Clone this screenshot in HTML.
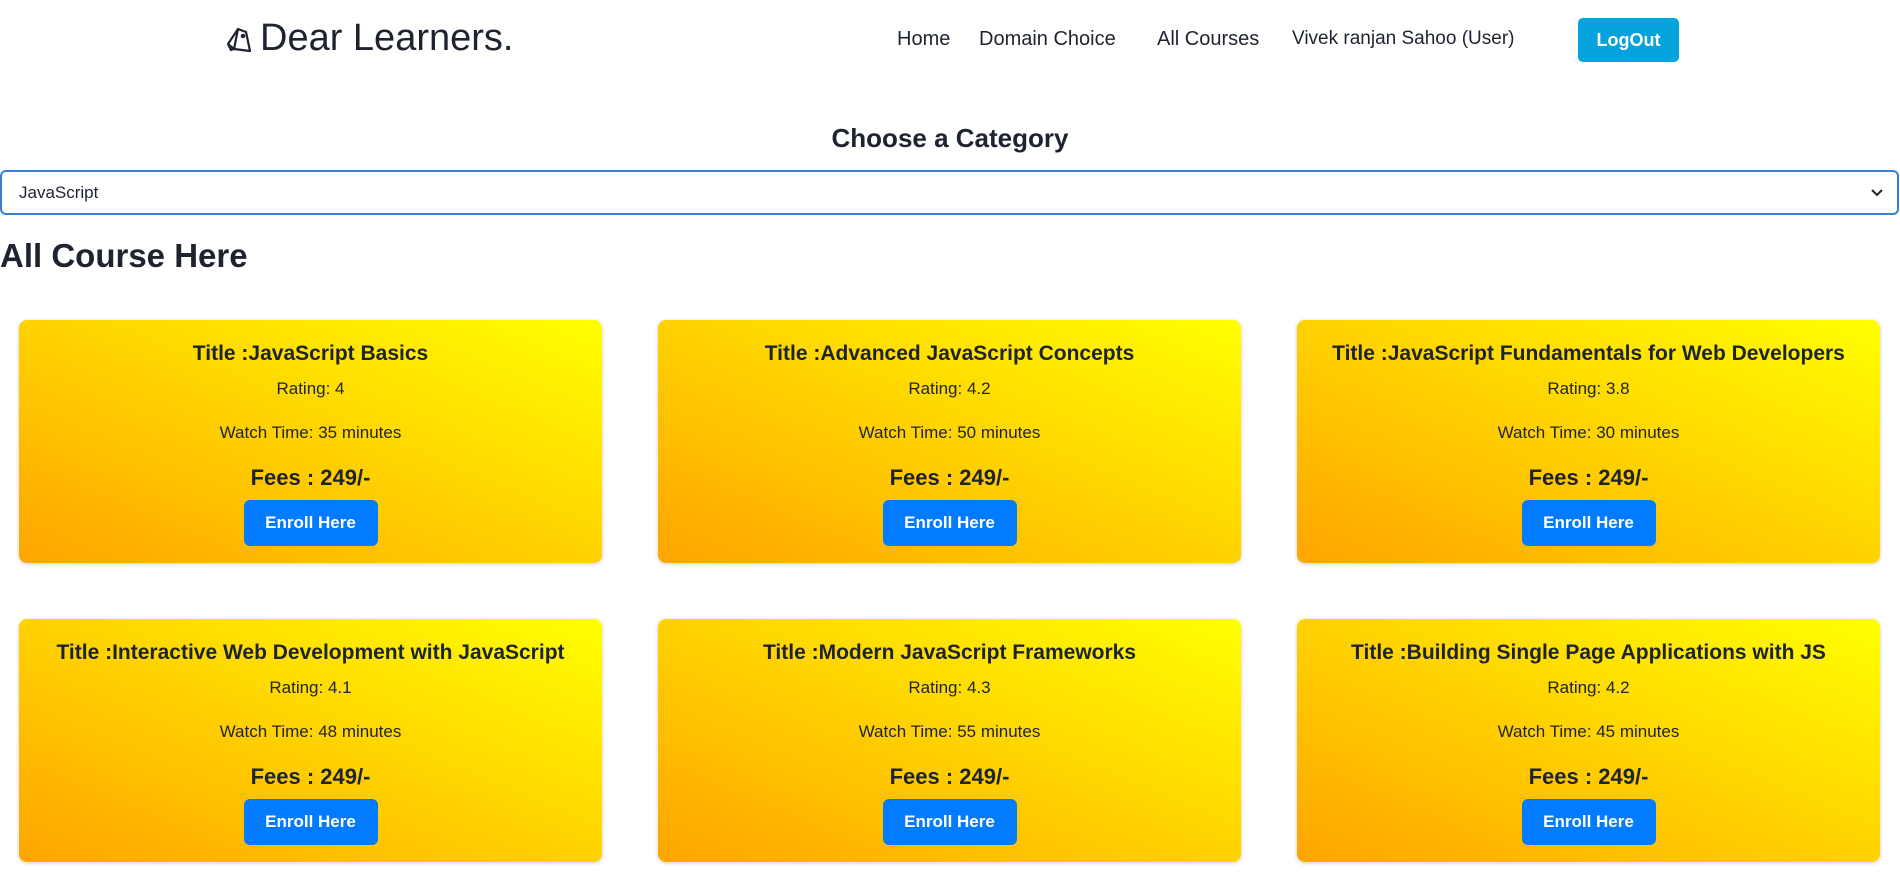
<!DOCTYPE html>
<html><head><meta charset="utf-8"><style>
*{box-sizing:border-box;margin:0;padding:0}
body{width:1900px;height:876px;background:#fff;font-family:"Liberation Sans",sans-serif;color:#1e2330;position:relative;overflow:hidden}
.abs{position:absolute}
.logo{left:224px;top:17px;font-size:38px;display:flex;align-items:center;gap:6px;color:#1e2330}
.nav{top:28px;font-size:20px;color:#1e2330}
.btnlog{left:1578px;top:18px;width:101px;height:44px;background:#04a3de;color:#fff;border-radius:5px;font-weight:bold;font-size:18px;display:flex;align-items:center;justify-content:center}
h2{position:absolute;left:0;width:1900px;top:123px;text-align:center;font-size:26px;font-weight:bold}
.sel{left:0;top:170px;width:1899px;height:45px;border:2px solid #3a80d2;border-radius:6px;font-size:17px;padding:11px 17px}
h1{position:absolute;left:0;top:237px;font-size:33px;font-weight:bold}
.card{position:absolute;width:583px;height:243px;border-radius:8px;background:linear-gradient(to top right,#ffa500,#ffff00);box-shadow:0 1px 4px rgba(0,0,0,.2);text-align:center}
.t{position:absolute;left:0;right:0;top:22px;font-size:21px;font-weight:bold}
.r{position:absolute;left:0;right:0;top:59px;font-size:17px}
.w{position:absolute;left:0;right:0;top:103px;font-size:17px}
.f{position:absolute;left:0;right:0;top:145px;font-size:22px;font-weight:bold}
.b{position:absolute;left:50%;margin-left:-67px;top:180px;width:134px;height:46px;background:#037bfe;color:#fff;border-radius:6px;font-weight:bold;font-size:17px;line-height:46px}
</style></head><body>
<div class="abs logo"><svg width="30" height="30" viewBox="0 0 30 30" fill="none" stroke="#1e2330" stroke-width="2.2" stroke-linejoin="round"><path d="M4 20 L14 5 L22 8 L26 27 L10 25 Z"/><path d="M14 5 L10 25"/><path d="M4 20 L7 26 L10 25"/><circle cx="19" cy="12" r="1.2"/></svg><span>Dear Learners.</span></div>
<div class="abs nav" style="left:897px">Home</div>
<div class="abs nav" style="left:979px">Domain Choice</div>
<div class="abs nav" style="left:1157px">All Courses</div>
<div class="abs nav" style="left:1292px;font-size:19px">Vivek ranjan Sahoo (User)</div>
<div class="abs btnlog">LogOut</div>
<h2>Choose a Category</h2>
<div class="abs sel">JavaScript<svg class="abs" style="right:14px;top:17px" width="12" height="8" viewBox="0 0 12 8"><path d="M1 1 L6 6 L11 1" fill="none" stroke="#222" stroke-width="2"/></svg></div>
<h1>All Course Here</h1>

<div class="card" style="left:19px;top:320px"><div class="t">Title :JavaScript Basics</div><div class="r">Rating: 4</div><div class="w">Watch Time: 35 minutes</div><div class="f">Fees : 249/-</div><div class="b">Enroll Here</div></div>
<div class="card" style="left:658px;top:320px"><div class="t">Title :Advanced JavaScript Concepts</div><div class="r">Rating: 4.2</div><div class="w">Watch Time: 50 minutes</div><div class="f">Fees : 249/-</div><div class="b">Enroll Here</div></div>
<div class="card" style="left:1297px;top:320px"><div class="t">Title :JavaScript Fundamentals for Web Developers</div><div class="r">Rating: 3.8</div><div class="w">Watch Time: 30 minutes</div><div class="f">Fees : 249/-</div><div class="b">Enroll Here</div></div>
<div class="card" style="left:19px;top:619px"><div class="t">Title :Interactive Web Development with JavaScript</div><div class="r">Rating: 4.1</div><div class="w">Watch Time: 48 minutes</div><div class="f">Fees : 249/-</div><div class="b">Enroll Here</div></div>
<div class="card" style="left:658px;top:619px"><div class="t">Title :Modern JavaScript Frameworks</div><div class="r">Rating: 4.3</div><div class="w">Watch Time: 55 minutes</div><div class="f">Fees : 249/-</div><div class="b">Enroll Here</div></div>
<div class="card" style="left:1297px;top:619px"><div class="t">Title :Building Single Page Applications with JS</div><div class="r">Rating: 4.2</div><div class="w">Watch Time: 45 minutes</div><div class="f">Fees : 249/-</div><div class="b">Enroll Here</div></div>
</body></html>
